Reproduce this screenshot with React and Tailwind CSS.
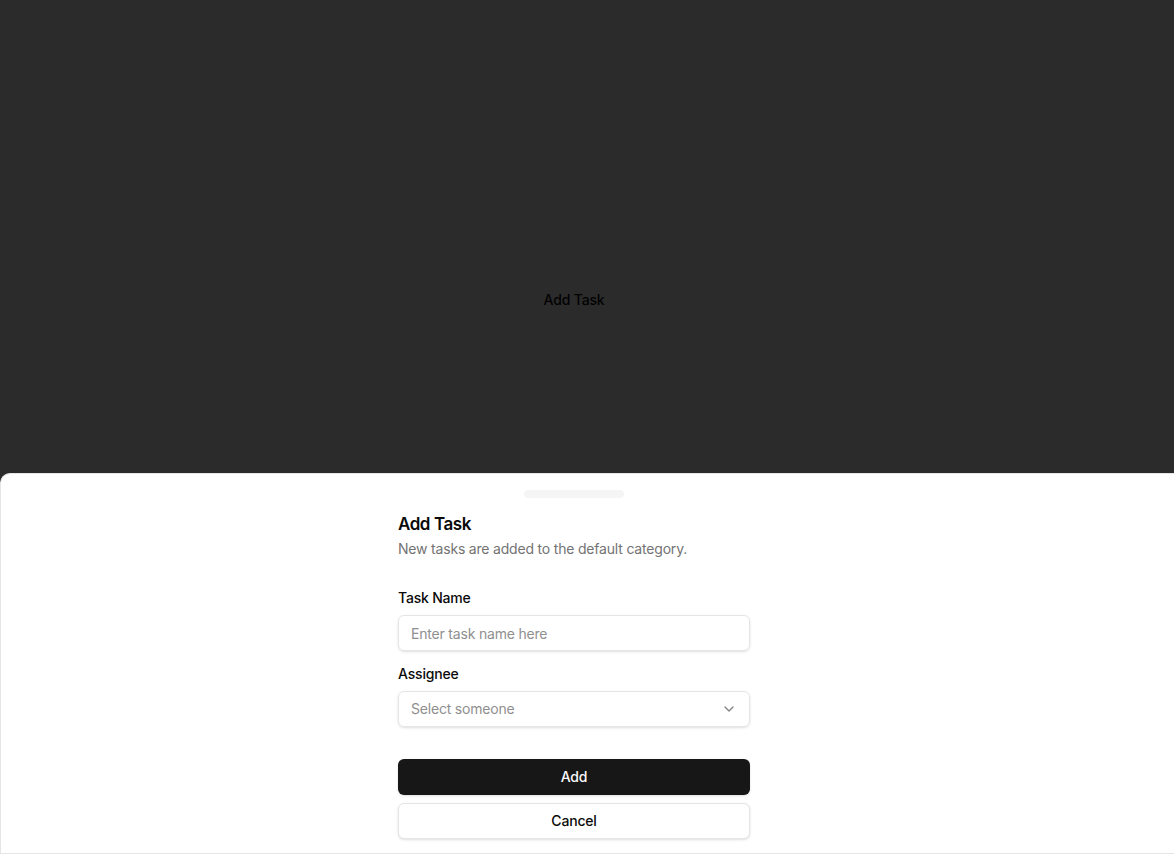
import { ChevronDown } from 'lucide-react';

export default function App() {
  return (
    <div className="relative min-h-screen w-full overflow-hidden bg-white" style={{ fontFamily: 'Inter, "Noto Sans", sans-serif' }}>
      {/* page behind the drawer */}
      <div className="flex h-[600px] w-[1148px] items-center justify-center">
        <button type="button" className="rounded-md px-4 py-2 text-sm font-medium tracking-[-0.012em] text-[#0a0a0a]">
          Add Task
        </button>
      </div>

      {/* overlay */}
      <div className="fixed inset-0 z-40 bg-black/[0.83]" />

      {/* drawer (runs past the right edge of the window) */}
      <div className="fixed inset-x-0 bottom-0 z-50 flex flex-col rounded-tl-[10px] border border-r-0 border-[#e5e5e5] bg-white tracking-[-0.012em]">
        <div className="w-[1146px]">
          <div className="mx-auto mt-4 h-2 w-[100px] rounded-full bg-[#f5f5f5]" />
          <div className="mx-auto w-full max-w-sm">
            <div className="flex flex-col gap-1.5 px-4 pb-4 pt-[18px]">
              <h2 className="text-[17px] font-semibold leading-none tracking-tight text-[#0a0a0a]">Add Task</h2>
              <p className="text-sm text-[#737373]">New tasks are added to the default category.</p>
            </div>

            <div className="flex flex-col gap-4 px-4 pt-4">
              <div className="flex flex-col gap-2.5">
                <label className="text-sm font-medium leading-none text-[#0a0a0a]">Task Name</label>
                <input
                  type="text"
                  placeholder="Enter task name here"
                  className="h-9 w-full rounded-md border border-[#e5e5e5] bg-transparent px-3 py-1 text-sm text-[#0a0a0a] shadow-sm outline-none placeholder:text-[#8f8f8f]"
                />
              </div>
              <div className="flex flex-col gap-2.5">
                <label className="text-sm font-medium leading-none text-[#0a0a0a]">Assignee</label>
                <button
                  type="button"
                  className="flex h-9 w-full items-center justify-between rounded-md border border-[#e5e5e5] bg-transparent px-3 py-2 text-sm text-[#8f8f8f] shadow-sm"
                >
                  <span>Select someone</span>
                  <ChevronDown className="h-4 w-4 text-[#0a0a0a] opacity-50" />
                </button>
              </div>
            </div>

            <div className="mt-4 flex flex-col gap-2 px-4 pb-[14px] pt-4">
              <button type="button" className="h-9 w-full rounded-md bg-[#171717] text-sm font-medium text-[#fafafa] shadow">
                Add
              </button>
              <button type="button" className="h-9 w-full rounded-md border border-[#e5e5e5] bg-white text-sm font-medium text-[#0a0a0a] shadow-sm">
                Cancel
              </button>
            </div>
          </div>
        </div>
      </div>
    </div>
  );
}
